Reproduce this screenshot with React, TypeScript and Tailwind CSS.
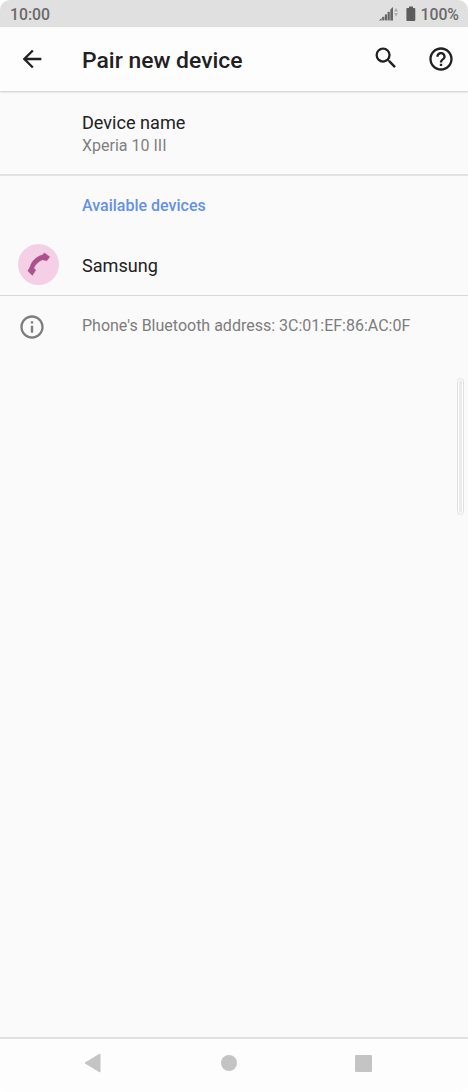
import React from 'react';
import { MdArrowBack, MdSearch, MdHelpOutline, MdOutlineInfo } from 'react-icons/md';

function SignalIcon() {
    return (
        <svg width="20" height="16" viewBox="0 0 20 16" className="shrink-0">
            <g fill="#666666">
                <path d="M0 14.4L2.6 12V14.4Z" />
                <rect x="3.2" y="10.8" width="2.2" height="3.6" />
                <rect x="5.9" y="8.4" width="2.2" height="6" />
                <rect x="8.6" y="5.8" width="2.2" height="8.6" />
                <path d="M11.3 3.4L14 1V14.4H11.3Z" />
            </g>
            <path d="M15 5.6L17 1.8L19 5.6ZM15 7H19L17 10.8Z" fill="#adadad" />
        </svg>
    );
}

function BatteryIcon() {
    return (
        <svg width="10" height="16" viewBox="0 0 10 16" className="shrink-0">
            <path d="M3 0.5H7V2H8.3Q9.3 2 9.3 3V14Q9.3 15 8.3 15H1.4Q0.4 15 0.4 14V3Q0.4 2 1.4 2H3Z" fill="#5c5c5c" />
        </svg>
    );
}

function PhoneIcon() {
    return (
        <svg width="41" height="41" viewBox="0 0 41 41">
            <path
                d="M9.8 27L12.2 22.6C13.6 17 18.8 12.2 24.4 11L26.4 8.9L31.7 12.8L28.8 16.8L24.4 15.8C20.6 17.4 17.2 20.6 15.8 24.2L17.8 26L14.4 31.4Z"
                fill="#ab528d"
                stroke="#ab528d"
                strokeWidth="0.4"
                strokeLinejoin="round"
            />
        </svg>
    );
}

export default function App() {
    return (
        <div className="bg-white">
            <div className="relative flex h-[1092px] w-[468px] flex-col overflow-hidden rounded-[10px] bg-[#fafafa] font-['Roboto',sans-serif] text-[#212121]">
                {/* status bar */}
                <div className="flex h-[27px] shrink-0 items-center bg-[#e0e0e0] pl-2.5 pr-[9px] text-[15.8px] font-medium text-[#6a6a6a]">
                    <span className="pt-0.5">10:00</span>
                    <div className="ml-auto flex items-center">
                        <SignalIcon />
                        <div className="ml-[7px] mr-1 flex"><BatteryIcon /></div>
                        <span className="pt-0.5">100%</span>
                    </div>
                </div>

                {/* app bar */}
                <div className="relative flex h-16 shrink-0 items-center bg-[#fdfdfd] pl-[18px] pr-[13px] shadow-[0_1px_2px_rgba(0,0,0,0.2)]">
                    <MdArrowBack size={28} />
                    <h1 className="ml-9 mt-1 text-[22.9px] font-medium">Pair new device</h1>
                    <MdSearch size={28} className="mb-0.5 ml-auto" />
                    <MdHelpOutline size={28} className="mb-px ml-[27px]" />
                </div>

                <div className="flex h-[85px] shrink-0 flex-col border-b-2 border-[#e2e2e2] pl-[82px] pt-5">
                    <p className="text-[18.1px] leading-6">Device name</p>
                    <p className="text-base leading-[22px] text-[#818181]">Xperia 10 III</p>
                </div>

                <div className="flex h-[120px] shrink-0 flex-col border-b border-[#d9d9d9]">
                    <h2 className="pl-[82px] pt-[18px] text-base font-medium leading-6 text-[#6490e5]">Available devices</h2>
                    <div className="mt-[26px] flex h-[41px] items-center pl-[18px]">
                        <div className="h-[41px] w-[41px] rounded-full bg-[#f4cfe5]"><PhoneIcon /></div>
                        <p className="ml-[23px] pt-0.5 text-[18.1px]">Samsung</p>
                    </div>
                </div>

                <div className="flex items-center pl-[18px] pt-[17px] text-[#7d7d7d]">
                    <MdOutlineInfo size={28} />
                    <p className="ml-9 pb-0.5 text-base">Phone's Bluetooth address: 3C:01:EF:86:AC:0F</p>
                </div>

                {/* edge handle */}
                <div className="absolute right-1 top-[378px] flex h-[137px] w-[7px] justify-center rounded-full border border-[#e0e0e0] bg-white p-px">
                    <div className="w-[3px] rounded-full bg-[#ebebeb]" />
                </div>

                {/* navigation bar */}
                <div className="mt-auto flex h-[55px] shrink-0 items-center border-t-2 border-[#e2e2e2] bg-[#fdfdfd] pb-[5px] pl-[84px]">
                    <svg width="17" height="20" viewBox="0 0 17 20">
                        <path d="M1 10L16 1V19Z" fill="#c4c4c4" stroke="#c4c4c4" strokeLinejoin="round" />
                    </svg>
                    <div className="ml-[120px] h-4 w-4 rounded-full bg-[#c4c4c4]" />
                    <div className="ml-[118px] h-[17px] w-[17px] rounded-[1px] bg-[#c4c4c4]" />
                </div>
            </div>
        </div>
    );
}
